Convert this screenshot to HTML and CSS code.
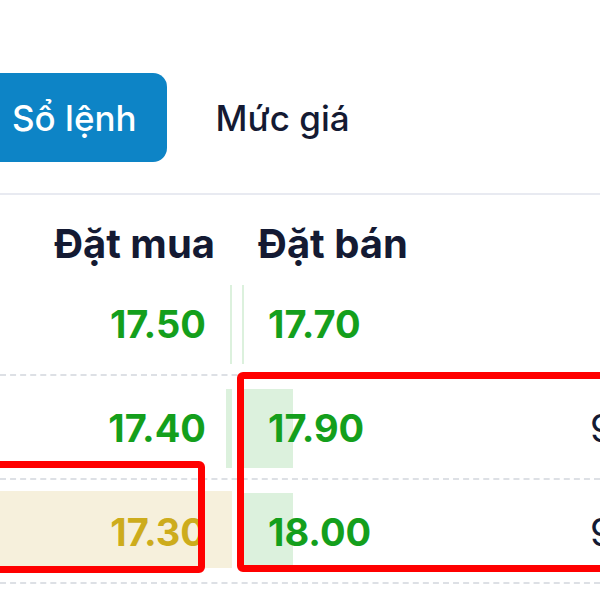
FILE: index.html
```html
<!DOCTYPE html>
<html lang="vi">
<head>
<meta charset="utf-8">
<link rel="stylesheet" href="styles.css">
</head>
<body>
<div class="page">
  <div class="tabs">
    <div class="tab active">Sổ lệnh</div>
    <div class="tab">Mức giá</div>
  </div>
  <div class="book">
    <div class="row head">
      <div class="cell bid">Đặt mua</div>
      <div class="cell ask">Đặt bán</div>
      <div class="cell vol"></div>
    </div>
    <div class="row">
      <div class="cell bid"><span class="bar" style="width:2px"></span><span class="num">17.50</span></div>
      <div class="cell ask"><span class="bar" style="width:2px"></span><span class="num">17.70</span></div>
      <div class="cell vol"></div>
    </div>
    <div class="row">
      <div class="cell bid"><span class="bar" style="width:6px"></span><span class="num">17.40</span></div>
      <div class="cell ask"><span class="bar" style="width:51px"></span><span class="num">17.90</span></div>
      <div class="cell vol">9,500</div>
    </div>
    <div class="row">
      <div class="cell bid hl"><span class="num">17.30</span></div>
      <div class="cell ask"><span class="bar" style="width:51px"></span><span class="num">18.00</span></div>
      <div class="cell vol">9,800</div>
    </div>
    <div class="mark mark-bid"></div>
    <div class="mark mark-ask"></div>
  </div>
</div>
</body>
</html>
```
FILE: styles.css
```css
html, body {
  margin: 0;
  padding: 0;
  background: #ffffff;
  overflow: hidden;
}
.page {
  width: 600px;
  height: 600px;
  overflow: hidden;
  font-family: Inter, "Noto Sans", sans-serif;
  color: #141a33;
}
.tabs {
  display: flex;
  align-items: center;
  gap: 17px;
  margin-top: 73px;
  margin-left: -20px;
  height: 89px;
}
.tab {
  height: 89px;
  display: flex;
  align-items: center;
  padding: 0 31px 0 32px;
  font-size: 35px;
  font-weight: 500;
  color: #141a33;
  border-radius: 14px;
}
.tab.active {
  background: #0d84c6;
  color: #ffffff;
  padding-right: 30px;
}
.book {
  position: relative;
  margin-top: 31px;
  border-top: 2px solid #e8eaf1;
}
.row {
  display: grid;
  grid-template-columns: 232px 10px 348px auto;
  height: 104px;
  border-bottom: 2px dashed #dde0e5;
  box-sizing: border-box;
}
.row .cell.ask { grid-column: 3; }
.row .cell.vol { grid-column: 4; }
.cell {
  position: relative;
  display: flex;
  align-items: center;
  font-size: 38px;
  font-weight: 700;
  padding-top: 2px;
}
.cell.bid { justify-content: flex-end; padding-right: 26px; }
.cell.ask { padding-left: 26px; }
.num { position: relative; color: #149f1c; }
.bar {
  position: absolute;
  top: 13px;
  bottom: 10px;
  background: #dcf1dd;
}
.bid .bar { right: 0; }
.ask .bar { left: 0; }
.cell.hl {
  background: linear-gradient(#f6f0dc, #f6f0dc) no-repeat 0 11px / 100% 77px;
}
.cell.hl .num { color: #cdac1c; }
.cell.vol {
  font-weight: 400;
  color: #141a33;
  white-space: nowrap;
  padding-left: 0;
}
.row.head {
  height: 77px;
  border-bottom: none;
}
.row.head .cell {
  align-items: flex-end;
  padding-bottom: 4px;
  font-size: 40px;
  font-weight: 700;
  color: #141a33;
}
.row.head .cell.bid { padding-right: 17px; }
.row.head .cell.ask { padding-left: 16px; }
.mark {
  position: absolute;
  border: 7px solid #ff0000;
  border-radius: 6px;
  box-sizing: border-box;
}
.mark-bid {
  left: -20px;
  width: 225px;
  top: 266px;
  height: 112px;
}
.mark-ask {
  left: 237px;
  width: 400px;
  top: 177px;
  height: 200px;
}
```
